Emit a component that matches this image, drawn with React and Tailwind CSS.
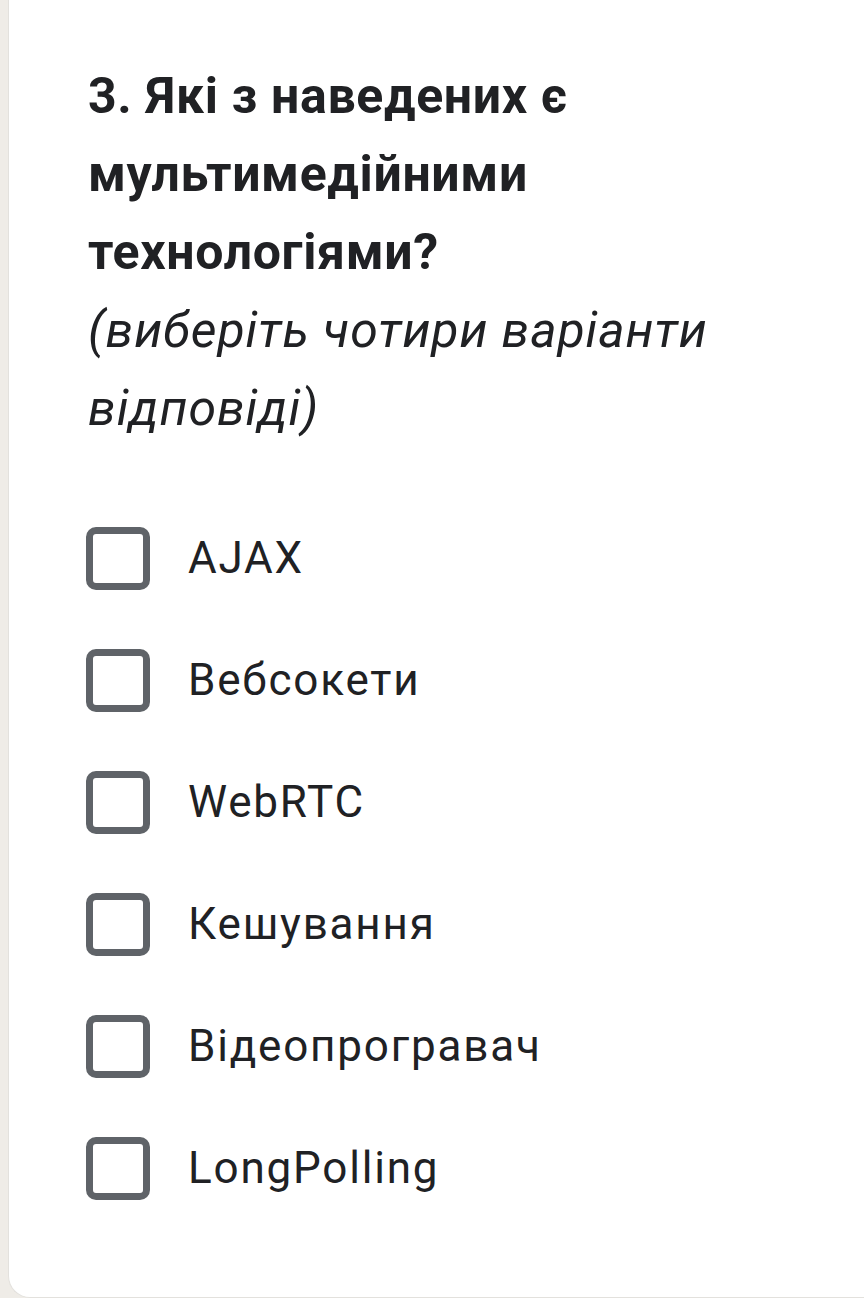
import React from 'react'

const options = ['AJAX', 'Вебсокети', 'WebRTC', 'Кешування', 'Відеопрогравач', 'LongPolling']

const App = () => {
  return (
    <div className="min-h-[1298px] bg-[#efece7] pl-[8px] flex" style={{ fontFamily: 'Roboto, "Noto Sans", sans-serif' }}>
      <div className="flex-1 bg-white border-l border-b border-[#e3e1dd] rounded-bl-[22px] pl-[79px] pt-[57px] pb-[60px]">
        <h2 className="text-[50px] leading-[78px] font-bold tracking-[0.65px] text-[#202124]">
          3. Які з наведених є
          <br />
          мультимедійними
          <br />
          технологіями?
        </h2>
        <p className="text-[50px] leading-[78px] italic tracking-[0.9px] text-[#202124]">
          (виберіть чотири варіанти
          <br />
          відповіді)
        </p>
        <div className="mt-[50px] flex flex-col">
          {options.map((o) => (
            <label key={o} className="h-[122px] flex items-center">
              <span className="-ml-[2px] w-[64px] h-[63px] border-[7px] border-[#5f6368] rounded-[10px] shrink-0" />
              <span className="ml-[38px] text-[44px] tracking-[1.8px] text-[#202124]">{o}</span>
            </label>
          ))}
        </div>
      </div>
    </div>
  )
}

export default App
